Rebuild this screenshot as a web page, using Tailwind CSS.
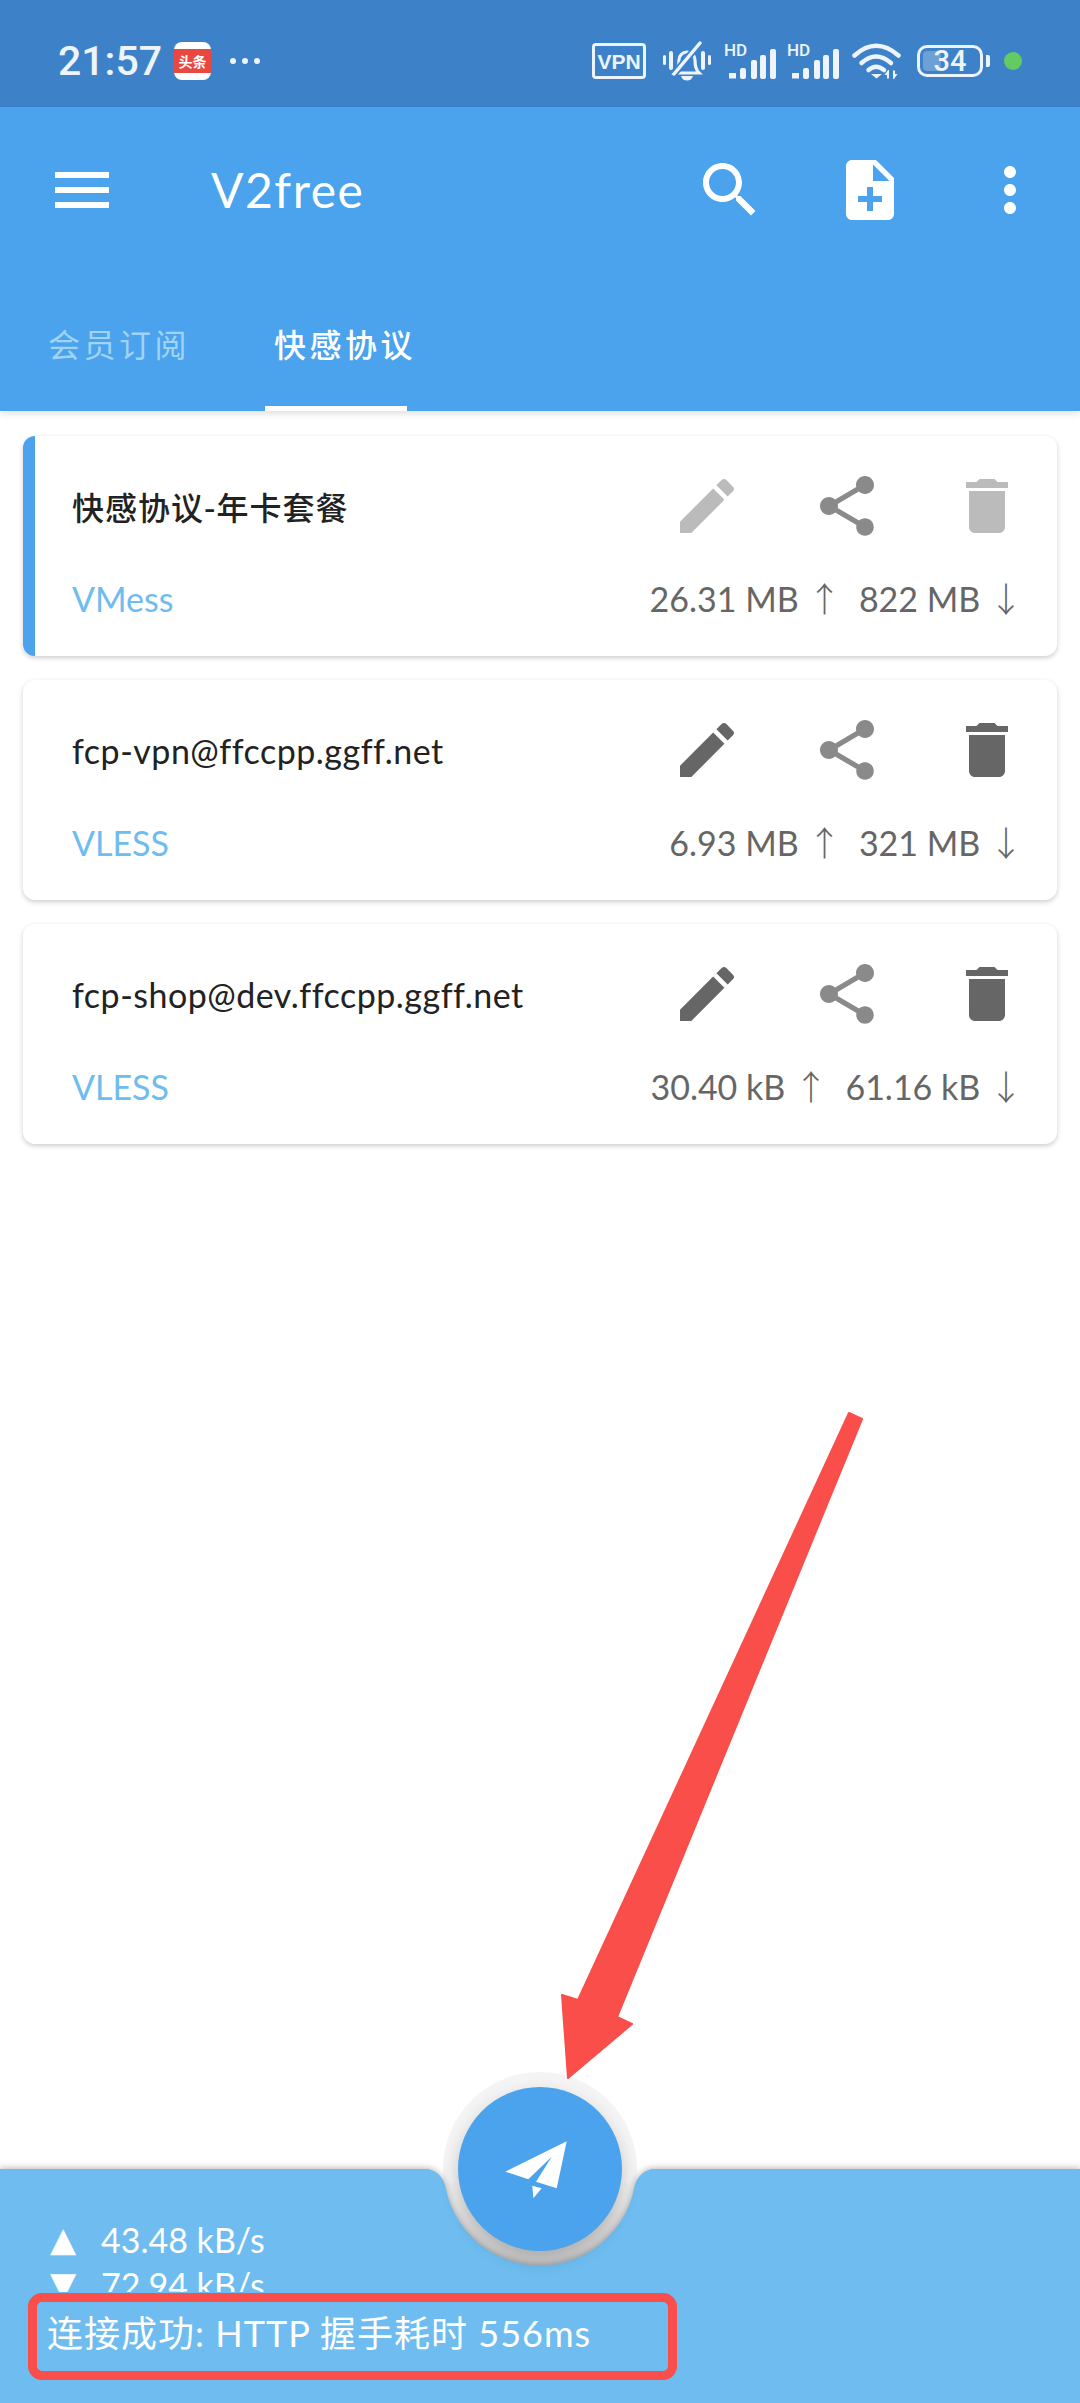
<!DOCTYPE html>
<html lang="zh-CN">
<head>
  <meta charset="UTF-8" />
  <title>V2free</title>
  <script src="https://cdn.jsdelivr.net/npm/@tailwindcss/browser@4"></script>
</head>
<body class="bg-white">
<div class="relative flex flex-col w-[1080px] h-[2403px] overflow-hidden bg-white font-['Lato','Noto_Sans_CJK_SC',sans-serif]">

  <!-- status bar -->
  <div class="flex items-center justify-between h-[107px] shrink-0 pt-[15px] pl-[58px] pr-[58px] bg-[#3d82c9] text-[#edf4fb]">
    <div class="flex items-center">
      <span class="w-[96px] text-[41px] leading-none font-medium font-['Roboto']">21:57</span>
      <div class="ml-[20px] w-[37px] h-[38px] rounded-[8px] bg-white flex items-center justify-center overflow-hidden">
        <span class="w-full h-[24px] bg-[#e8483f] text-white text-[14px] leading-[24px] text-center font-bold font-['Noto_Sans_CJK_SC'] whitespace-nowrap">头条</span>
      </div>
      <div class="ml-[19px] flex gap-[6px]">
        <span class="w-[6px] h-[6px] rounded-full bg-[#edf4fb]"></span>
        <span class="w-[6px] h-[6px] rounded-full bg-[#edf4fb]"></span>
        <span class="w-[6px] h-[6px] rounded-full bg-[#edf4fb]"></span>
      </div>
    </div>
    <div class="flex items-center">
      <div class="w-[54px] h-[36px] border-[3.5px] border-[#edf4fb] rounded-[4px] flex items-center justify-center text-[21px] leading-none font-bold font-['Liberation_Sans']">VPN</div>
      <svg class="ml-[17px] w-[48px] h-[40px]" viewBox="0 0 48 40" fill="none">
        <rect x="0" y="14" width="3" height="10" rx="1.5" fill="#edf4fb"/>
        <rect x="6" y="10" width="4" height="19" rx="2" fill="#edf4fb"/>
        <rect x="38" y="10" width="4" height="19" rx="2" fill="#edf4fb"/>
        <rect x="45" y="14" width="3" height="10" rx="1.5" fill="#edf4fb"/>
        <path d="M12 32c3-3 4-6 4-13a8 8 0 0 1 16 0c0 7 1 10 4 13z" stroke="#edf4fb" stroke-width="3.2"/>
        <path d="M18 35h12c-1 3-3 4.500-6 4.500s-5-1.500-6-4.500z" fill="#edf4fb"/>
        <path d="M11 33 37 2" stroke="#3d82c9" stroke-width="7"/>
        <path d="M11 33 37 2" stroke="#edf4fb" stroke-width="3.500" stroke-linecap="round"/>
      </svg>
      <div class="relative ml-[13px] w-[52px] h-[36px]">
        <span class="absolute left-0 top-[-3px] text-[17px] leading-[20px] font-medium font-['Roboto']">HD</span>
        <svg class="w-[52px] h-[36px]" viewBox="0 0 52 36" fill="#edf4fb">
          <path d="M5 30h7v5.500H5z"/><rect x="16" y="25" width="6" height="11" rx="2"/><rect x="27" y="17" width="6" height="19" rx="2"/><rect x="36" y="12" width="6" height="24" rx="2"/><rect x="46" y="6" width="6" height="30" rx="2"/>
        </svg>
      </div>
      <div class="relative ml-[11px] w-[52px] h-[36px]">
        <span class="absolute left-0 top-[-3px] text-[17px] leading-[20px] font-medium font-['Roboto']">HD</span>
        <svg class="w-[52px] h-[36px]" viewBox="0 0 52 36" fill="#edf4fb">
          <path d="M5 30h7v5.500H5z"/><rect x="16" y="25" width="6" height="11" rx="2"/><rect x="27" y="17" width="6" height="19" rx="2"/><rect x="36" y="12" width="6" height="24" rx="2"/><rect x="46" y="6" width="6" height="30" rx="2"/>
        </svg>
      </div>
      <svg class="ml-[13px] w-[49px] h-[36px]" viewBox="0 0 49 36" fill="none" stroke="#edf4fb" stroke-linecap="round">
        <path d="M2.500 12.500Q24-7 46.500 12.500" stroke-width="4.500"/>
        <path d="M9.500 20Q24 7 39 20" stroke-width="4.500"/>
        <path d="M16.500 27Q24 20.500 32 27" stroke-width="4.500"/>
        <path d="M19 31h11l-5.500 4.500z" fill="#edf4fb" stroke="none"/>
        <path d="M36 27l-3.500 5h2.500v3.500h2v-8.500zM42 36l3.500-5H43v-3.500h-2V36z" fill="#edf4fb" stroke="none"/>
      </svg>
      <div class="ml-[16px] flex items-center">
        <div class="relative w-[66px] h-[32px] border-[3.5px] border-[#edf4fb] rounded-[10px] flex items-center justify-center">
          <span class="absolute left-[3px] top-[3px] bottom-[3px] w-[18px] rounded-[4px] bg-white/25"></span>
          <span class="relative text-[29px] leading-none font-medium font-['Roboto']">34</span>
        </div>
        <span class="ml-[3px] w-[4px] h-[12px] rounded-r-[2px] bg-[#edf4fb]"></span>
      </div>
      <span class="ml-[14px] w-[18px] h-[18px] rounded-full bg-[#62cb62]"></span>
    </div>
  </div>

  <!-- app bar + tabs -->
  <div class="relative z-10 flex flex-col h-[304px] shrink-0 bg-[#4aa3ec] text-white shadow-[0_3px_7px_rgba(0,0,0,0.12)]">
    <div class="flex items-center h-[72px] mt-[47px] pl-[46px] pr-[34px]">
      <svg class="w-[72px] h-[72px]" viewBox="0 0 24 24" fill="#fff"><path d="M3 18h18v-2H3v2zm0-5h18v-2H3v2zm0-7v2h18V6H3z"/></svg>
      <span class="ml-[93px] flex-1 text-[48px] tracking-[1.5px] leading-none">V2free</span>
      <div class="flex gap-[68px]">
        <svg class="w-[72px] h-[72px]" viewBox="0 0 24 24" fill="#fff"><path d="M15.500 14h-.79l-.28-.27C15.410 12.590 16 11.110 16 9.500 16 5.910 13.090 3 9.500 3S3 5.910 3 9.500 5.910 16 9.500 16c1.610 0 3.090-.59 4.230-1.570l.27.28v.79l5 4.990L20.490 19l-4.990-5zm-6 0C7.010 14 5 11.990 5 9.500S7.010 5 9.500 5 14 7.010 14 9.500 11.990 14 9.500 14z"/></svg>
        <svg class="w-[72px] h-[72px]" viewBox="0 0 24 24" fill="#fff"><path d="M14 2H6c-1.100 0-1.990.9-1.990 2L4 20c0 1.100.89 2 1.990 2H18c1.100 0 2-.9 2-2V8l-6-6zm2 14h-3v3h-2v-3H8v-2h3v-3h2v3h3v2zm-3-7V3.500L18.500 9H13z"/></svg>
        <svg class="w-[72px] h-[72px]" viewBox="0 0 24 24" fill="#fff"><path d="M12 8c1.100 0 2-.9 2-2s-.9-2-2-2-2 .9-2 2 .9 2 2 2zm0 2c-1.100 0-2 .9-2 2s.9 2 2 2 2-.9 2-2-.9-2-2-2zm0 6c-1.100 0-2 .9-2 2s.9 2 2 2 2-.9 2-2-.9-2-2-2z"/></svg>
      </div>
    </div>
    <div class="flex gap-[84px] mt-auto pl-[39px] h-[136px]">
      <div class="relative w-[142px] flex items-center pl-[9px] text-[32px] tracking-[3.500px] whitespace-nowrap text-[#9fd4f6] font-['Noto_Sans_CJK_SC']">会员订阅</div>
      <div class="relative w-[142px] flex items-center pl-[9px] text-[32px] tracking-[3.500px] whitespace-nowrap font-medium font-['Noto_Sans_CJK_SC'] border-b-[5px] border-white pt-[5px]">快感协议</div>
    </div>
  </div>

  <!-- server list -->
  <div class="flex-1 flex flex-col gap-[24px] pt-[25px] px-[23px]">
    <div class="h-[220px] rounded-[12px] bg-white border-l-[12px] border-[#4aa3ec] pl-[37px] pr-[34px] pt-[34px] shadow-[0_2px_5px_rgba(0,0,0,0.2)]">
      <div class="flex items-center h-[72px]">
        <span class="flex-1 text-[32px] tracking-[1px] text-[#222] font-medium font-['Noto_Sans_CJK_SC']">快感协议-年卡套餐</span>
        <div class="flex gap-[68px]">
          <svg class="w-[72px] h-[72px]" viewBox="0 0 24 24" fill="#bbb"><path d="M3 17.250V21h3.750L17.810 9.940l-3.750-3.750L3 17.250zM20.710 7.040c.39-.39.39-1.020 0-1.410l-2.340-2.340c-.39-.39-1.020-.39-1.410 0l-1.830 1.830 3.750 3.750 1.830-1.830z"/></svg>
          <svg class="w-[72px] h-[72px]" viewBox="0 0 24 24" fill="#8a8a8a"><path d="M18 16.080c-.76 0-1.440.3-1.960.77L8.910 12.700c.05-.23.09-.46.09-.7s-.04-.47-.09-.7l7.050-4.110c.54.5 1.250.81 2.040.81 1.660 0 3-1.340 3-3s-1.340-3-3-3-3 1.340-3 3c0 .24.04.47.09.7L8.040 9.810C7.500 9.310 6.790 9 6 9c-1.660 0-3 1.340-3 3s1.340 3 3 3c.79 0 1.500-.31 2.040-.81l7.120 4.160c-.05.21-.08.43-.08.65 0 1.610 1.310 2.920 2.920 2.920 1.610 0 2.920-1.310 2.920-2.920s-1.310-2.920-2.920-2.920z"/></svg>
          <svg class="w-[72px] h-[72px]" viewBox="0 0 24 24" fill="#bbb"><path d="M6 19c0 1.100.9 2 2 2h8c1.100 0 2-.9 2-2V7H6v12zM19 4h-3.500l-1-1h-5l-1 1H5v2h14V4z"/></svg>
        </div>
      </div>
      <div class="flex items-center justify-between mt-[31px] h-[50px]">
        <span class="text-[34px] text-[#6ebcf0]">VMess</span>
        <span class="text-[34px] text-[#666] whitespace-pre">26.31 MB <span class="font-light font-['Noto_Sans_CJK_SC']">↑</span>  822 MB <span class="font-light font-['Noto_Sans_CJK_SC']">↓</span></span>
      </div>
    </div>

    <div class="h-[220px] rounded-[12px] bg-white border-l-[12px] border-white pl-[37px] pr-[34px] pt-[34px] shadow-[0_2px_5px_rgba(0,0,0,0.2)]">
      <div class="flex items-center h-[72px]">
        <span class="flex-1 text-[34px] tracking-[0.5px] text-[#222]">fcp-vpn@ffccpp.ggff.net</span>
        <div class="flex gap-[68px]">
          <svg class="w-[72px] h-[72px]" viewBox="0 0 24 24" fill="#666"><path d="M3 17.250V21h3.750L17.810 9.940l-3.750-3.750L3 17.250zM20.710 7.040c.39-.39.39-1.020 0-1.410l-2.340-2.340c-.39-.39-1.020-.39-1.410 0l-1.830 1.830 3.750 3.750 1.830-1.830z"/></svg>
          <svg class="w-[72px] h-[72px]" viewBox="0 0 24 24" fill="#8a8a8a"><path d="M18 16.080c-.76 0-1.440.3-1.960.77L8.910 12.700c.05-.23.09-.46.09-.7s-.04-.47-.09-.7l7.050-4.110c.54.5 1.250.81 2.040.81 1.660 0 3-1.340 3-3s-1.340-3-3-3-3 1.340-3 3c0 .24.04.47.09.7L8.040 9.810C7.500 9.310 6.790 9 6 9c-1.660 0-3 1.340-3 3s1.340 3 3 3c.79 0 1.500-.31 2.040-.81l7.120 4.160c-.05.21-.08.43-.08.65 0 1.610 1.310 2.920 2.920 2.920 1.610 0 2.920-1.310 2.920-2.920s-1.310-2.920-2.920-2.920z"/></svg>
          <svg class="w-[72px] h-[72px]" viewBox="0 0 24 24" fill="#666"><path d="M6 19c0 1.100.9 2 2 2h8c1.100 0 2-.9 2-2V7H6v12zM19 4h-3.500l-1-1h-5l-1 1H5v2h14V4z"/></svg>
        </div>
      </div>
      <div class="flex items-center justify-between mt-[31px] h-[50px]">
        <span class="text-[34px] text-[#6ebcf0]">VLESS</span>
        <span class="text-[34px] text-[#666] whitespace-pre">6.93 MB <span class="font-light font-['Noto_Sans_CJK_SC']">↑</span>  321 MB <span class="font-light font-['Noto_Sans_CJK_SC']">↓</span></span>
      </div>
    </div>

    <div class="h-[220px] rounded-[12px] bg-white border-l-[12px] border-white pl-[37px] pr-[34px] pt-[34px] shadow-[0_2px_5px_rgba(0,0,0,0.2)]">
      <div class="flex items-center h-[72px]">
        <span class="flex-1 text-[34px] tracking-[0.5px] text-[#222]">fcp-shop@dev.ffccpp.ggff.net</span>
        <div class="flex gap-[68px]">
          <svg class="w-[72px] h-[72px]" viewBox="0 0 24 24" fill="#666"><path d="M3 17.250V21h3.750L17.810 9.940l-3.750-3.750L3 17.250zM20.710 7.040c.39-.39.39-1.020 0-1.410l-2.340-2.340c-.39-.39-1.020-.39-1.410 0l-1.830 1.830 3.750 3.750 1.830-1.830z"/></svg>
          <svg class="w-[72px] h-[72px]" viewBox="0 0 24 24" fill="#8a8a8a"><path d="M18 16.080c-.76 0-1.440.3-1.960.77L8.910 12.700c.05-.23.09-.46.09-.7s-.04-.47-.09-.7l7.050-4.110c.54.5 1.250.81 2.040.81 1.660 0 3-1.340 3-3s-1.340-3-3-3-3 1.340-3 3c0 .24.04.47.09.7L8.040 9.810C7.500 9.310 6.790 9 6 9c-1.660 0-3 1.340-3 3s1.340 3 3 3c.79 0 1.500-.31 2.040-.81l7.120 4.160c-.05.21-.08.43-.08.65 0 1.610 1.310 2.920 2.920 2.920 1.610 0 2.920-1.310 2.920-2.920s-1.310-2.920-2.920-2.920z"/></svg>
          <svg class="w-[72px] h-[72px]" viewBox="0 0 24 24" fill="#666"><path d="M6 19c0 1.100.9 2 2 2h8c1.100 0 2-.9 2-2V7H6v12zM19 4h-3.500l-1-1h-5l-1 1H5v2h14V4z"/></svg>
        </div>
      </div>
      <div class="flex items-center justify-between mt-[31px] h-[50px]">
        <span class="text-[34px] text-[#6ebcf0]">VLESS</span>
        <span class="text-[34px] text-[#666] whitespace-pre">30.40 kB <span class="font-light font-['Noto_Sans_CJK_SC']">↑</span>  61.16 kB <span class="font-light font-['Noto_Sans_CJK_SC']">↓</span></span>
      </div>
    </div>
  </div>

  <!-- bottom bar with notch -->
  <div class="relative h-[234px] shrink-0 text-white">
    <svg class="absolute left-0 top-0 w-[1080px] h-[234px] overflow-visible" viewBox="0 0 1080 234">
      <defs>
        <linearGradient id="ring" gradientUnits="userSpaceOnUse" x1="0" y1="10" x2="0" y2="96">
          <stop offset="0" stop-color="#f4f4f4"/>
          <stop offset="1" stop-color="#cfcfcf"/>
        </linearGradient>
      </defs>
      <circle cx="540" cy="0" r="97" fill="url(#ring)"/>
      <path class="drop-shadow-[0_-1px_3px_rgba(0,0,0,0.28)]" d="M0 0H425C436 0 444 8 446 20A96 96 0 0 0 634 20C636 8 644 0 655 0H1080V234H0Z" fill="#6ebcf0"/>
    </svg>
    <div class="relative flex flex-col pt-[48px] pl-[47px]">
      <div class="h-[75px] overflow-hidden pl-[3px] text-[34px] leading-[45px]">
        <div class="flex"><span class="w-[51px] font-['DejaVu_Sans']">▲</span><span>43.48 kB/s</span></div>
        <div class="flex"><span class="w-[51px] font-['DejaVu_Sans']">▼</span><span>72.94 kB/s</span></div>
      </div>
      <div class="mt-[16px] h-[50px] text-[36px] leading-[50px] tracking-[1px] whitespace-pre">连接成功: HTTP 握手耗时 556ms</div>
    </div>
    <!-- start button -->
    <div class="absolute left-[458px] top-[-82px] w-[164px] h-[164px] rounded-full bg-[#4aa3ec] shadow-[0_8px_18px_rgba(0,0,0,0.2)]">
      <svg class="w-[164px] h-[164px]" viewBox="0 0 164 164" fill="#fff">
        <path d="M47.300 84.700 108.700 54.300 98.700 101.300 78 94.700 93.700 69.700 70.300 92.300Z"/>
        <path d="M74.300 98.700 83.700 101.300 75.300 111.300Z"/>
      </svg>
    </div>
    <!-- annotation box -->
    <div class="absolute left-[28px] top-[124px] w-[649px] h-[87px] border-[9px] border-[#f94e4a] rounded-[14px]"></div>
  </div>

  <!-- annotation arrow -->
  <svg class="absolute left-0 top-0 w-[1080px] h-[2403px] pointer-events-none z-20" viewBox="0 0 1080 2403">
    <path d="M849 1413 862 1419 617 2017 632 2024 568 2078 562 1995 578 2000Z" fill="#f94e4a" stroke="#f94e4a" stroke-width="2" stroke-linejoin="round"/>
  </svg>
</div>
</body>
</html>
